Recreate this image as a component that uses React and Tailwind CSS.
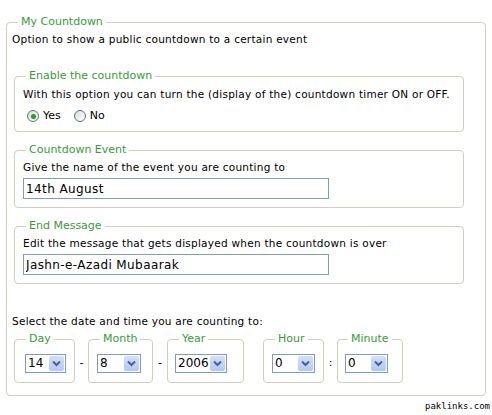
import React from "react";

const font = { fontFamily: '"DejaVu Sans", Verdana, sans-serif' };

function Chevron() {
  return (
    <svg width="9" height="7" viewBox="0 0 9 7">
      <path d="M1 1.5 L4.5 5 L8 1.5" fill="none" stroke="#4d6185" strokeWidth="2" />
    </svg>
  );
}

function FakeSelect({ value, w }) {
  return (
    <div className={`flex h-[19px] border border-[#7f9db9] bg-white p-[1px] ${w}`}>
      <span className="flex-1 pl-[1px] text-[12px] leading-[15px] text-black">{value}</span>
      <div className="flex w-[15px] items-center justify-center rounded-[2px] bg-gradient-to-b from-[#d2e0fd] to-[#b3c8f5]">
        <Chevron />
      </div>
    </div>
  );
}

function Radio({ checked }) {
  return (
    <span className="flex h-[12px] w-[12px] items-center justify-center rounded-full border border-[#5d7189] bg-gradient-to-br from-[#dcdcd5] to-white">
      {checked && <span className="h-[5px] w-[5px] rounded-full bg-[#2a9a2a]" />}
    </span>
  );
}

const dateParts = [
  { legend: "Day", value: "14", fw: "w-[61px]", pl: "pl-[10px]", lm: "ml-[1px]", sw: "w-[41px]", sep: "-", sepw: "w-[13px]" },
  { legend: "Month", value: "8", fw: "w-[65px]", pl: "pl-[8px]", lm: "ml-[3px]", sw: "w-[44px]", sep: "-", sepw: "w-[14px]" },
  { legend: "Year", value: "2006", fw: "w-[77px]", pl: "pl-[7px]", lm: "ml-[4px]", sw: "w-[52px]", sep: "", sepw: "w-[19px]" },
  { legend: "Hour", value: "0", fw: "w-[61px]", pl: "pl-[8px]", lm: "ml-[3px]", sw: "w-[43px]", sep: ":", sepw: "w-[13px]" },
  { legend: "Minute", value: "0", fw: "w-[66px]", pl: "pl-[7px]", lm: "ml-[3px]", sw: "w-[43px]", sep: null, sepw: "" },
];

const desc = "text-[10.5px] leading-[13px] tracking-[0.25px]";

export default function App() {
  return (
    <div className="h-[415px] w-[492px] overflow-hidden bg-white text-black" style={font}>
      <fieldset className="ml-[6px] mt-[15px] w-[480px] rounded-[4px] border border-[#d0d0bf] pb-[12px] pl-[5px] pr-[5px] pt-[4px]">
        <legend className="ml-[6px] px-[3px] text-[11px] leading-[14px] text-[#3a9a3a]">My Countdown</legend>
        <p className={desc}>Option to show a public countdown to a certain event</p>

        <fieldset className="ml-[2px] mt-[23px] w-[450px] rounded-[4px] border border-[#d0d0bf] pb-[7px] pl-[8px] pt-[5px]">
          <legend className="ml-[3px] px-[3px] text-[11px] leading-[14px] text-[#3a9a3a]">Enable the countdown</legend>
          <p className={desc}>With this option you can turn the (display of the) countdown timer ON or OFF.</p>
          <div className="ml-[4px] mt-[7px] flex h-[16px] items-center text-[11px]">
            <Radio checked />
            <span className="ml-[4px]">Yes</span>
            <span className="ml-[13px]"><Radio /></span>
            <span className="ml-[4px]">No</span>
          </div>
        </fieldset>

        <fieldset className="ml-[2px] mt-[11px] w-[450px] rounded-[4px] border border-[#d0d0bf] pb-[8px] pl-[8px] pt-[4px]">
          <legend className="ml-[3px] px-[3px] text-[11px] leading-[14px] text-[#3a9a3a]">Countdown Event</legend>
          <p className={desc}>Give the name of the event you are counting to</p>
          <input
            readOnly
            defaultValue="14th August"
            className="mt-[4px] block h-[21px] w-[306px] border border-[#7f9db9] bg-white pl-[2px] text-[12px] tracking-[0.4px] text-black outline-none"
            style={font}
          />
        </fieldset>

        <fieldset className="ml-[2px] mt-[11px] w-[450px] rounded-[4px] border border-[#d0d0bf] pb-[8px] pl-[8px] pt-[4px]">
          <legend className="ml-[3px] px-[3px] text-[11px] leading-[14px] text-[#3a9a3a]">End Message</legend>
          <p className={desc}>Edit the message that gets displayed when the countdown is over</p>
          <input
            readOnly
            defaultValue="Jashn-e-Azadi Mubaarak"
            className="mt-[4px] block h-[21px] w-[306px] border border-[#7f9db9] bg-white pl-[2px] text-[12px] tracking-[0.4px] text-black outline-none"
            style={font}
          />
        </fieldset>

        <p className={`mt-[31px] ${desc}`}>Select the date and time you are counting to:</p>

        <div className="ml-[2px] mt-[4px] flex items-start">
          {dateParts.map((d) => (
            <React.Fragment key={d.legend}>
              <fieldset className={`${d.fw} ${d.pl} rounded-[4px] border border-[#d0d0bf] pb-[9px] pt-[8px]`}>
                <legend className={`${d.lm} px-[3px] text-[11px] leading-[14px] text-[#3a9a3a]`}>{d.legend}</legend>
                <FakeSelect value={d.value} w={d.sw} />
              </fieldset>
              {d.sep !== null && (
                <span className={`${d.sepw} pt-[24px] text-center text-[11px] leading-[13px]`}>{d.sep}</span>
              )}
            </React.Fragment>
          ))}
        </div>
      </fieldset>
      <div
        className="mt-[5px] pr-[2px] text-right text-[9px] leading-[11px] text-black"
        style={{ fontFamily: '"DejaVu Sans Mono", monospace' }}
      >
        paklinks.com
      </div>
    </div>
  );
}
